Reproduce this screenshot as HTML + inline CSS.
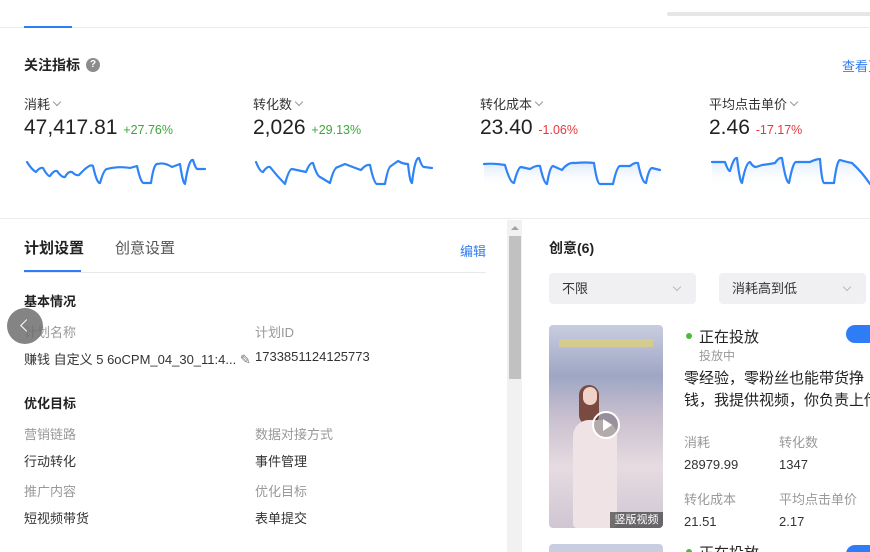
<!DOCTYPE html>
<html><head><meta charset="utf-8"><style>
*{margin:0;padding:0;box-sizing:border-box}
html,body{width:870px;height:552px;overflow:hidden}
body{background:#fff;font-family:"Liberation Sans","Noto Sans CJK SC",sans-serif;color:#333;position:relative}
.a{position:absolute;white-space:nowrap}
.lab{font-size:13px;color:#333}
.num{font-size:21px;color:#222}
.up{font-size:12.5px;color:#3da53d}
.dn{font-size:12.5px;color:#e8383d}
.g{font-size:13px;color:#999}
.v{font-size:13px;color:#333}
.b{font-size:13px;font-weight:bold;color:#222}
.sel{position:absolute;background:#f0f0f2;border-radius:4px;height:31px;top:273px;font-size:13px;color:#333;padding:0 13px;line-height:31px}
.chev{display:inline-block;width:6px;height:6px;border-right:1px solid #999;border-bottom:1px solid #999;transform:rotate(45deg);margin-left:4px;position:relative;top:-4px}
.sel .chev{position:absolute;right:16px;top:11px;border-color:#bbb}
</style></head><body>
<div class="a" style="left:0;top:27px;width:870px;height:1px;background:#ececec"></div>
<div class="a" style="left:24px;top:26px;width:48px;height:2px;background:#2f7df6"></div>
<div class="a" style="left:667px;top:12px;width:210px;height:4px;background:#e6e6e6;border-radius:3px"></div>

<div class="a" style="left:24px;top:55px;font-size:14px;font-weight:bold;color:#222">关注指标</div>
<div class="a" style="left:86px;top:58px;width:14px;height:14px;border-radius:50%;background:#8c8c8c;color:#fff;font-size:10px;text-align:center;line-height:14px;font-weight:bold">?</div>
<div class="a" style="left:842px;top:56px;font-size:13px;color:#2f7df6">查看更多</div>

<div class="a lab" style="left:24px;top:94px">消耗<span class="chev"></span></div>
<div class="a num" style="left:24px;top:116px">47,417.81 <span class="up">+27.76%</span></div>
<div class="a lab" style="left:253px;top:94px">转化数<span class="chev"></span></div>
<div class="a num" style="left:253px;top:116px">2,026 <span class="up">+29.13%</span></div>
<div class="a lab" style="left:480px;top:94px">转化成本<span class="chev"></span></div>
<div class="a num" style="left:480px;top:116px">23.40 <span class="dn">-1.06%</span></div>
<div class="a lab" style="left:709px;top:94px">平均点击单价<span class="chev"></span></div>
<div class="a num" style="left:709px;top:116px">2.46 <span class="dn">-17.17%</span></div>

<svg class="a" style="left:0;top:150px" width="870" height="40">
<defs><linearGradient id="f" x1="0" y1="0" x2="0" y2="1"><stop offset="0" stop-color="#dce9fb"/><stop offset="1" stop-color="#fff" stop-opacity="0"/></linearGradient></defs>
<g fill="url(#f)" stroke="none">
<path d="M484 14 L505 15 L514 33 L521 17 L530 19 L540 16 L547 34 L553 16 L562 20 L575 13 L594 13 L600 34 L613 34 L620 16 L630 16 L638 13 L646 33 L652 18 L660 20 L660 38 L484 38Z"/>
<path d="M712 12 L725 12 L730 21 L737 8 L742 33 L750 12 L756 17 L762 15 L775 13 L782 8 L789 33 L796 12 L810 12 L820 9 L824 33 L834 33 L840 10 L852 13 L870 34 L870 38 L712 38Z"/>
</g>
<g fill="none" stroke="#2f84f5" stroke-width="2.2" stroke-linejoin="round" stroke-linecap="round">
<path d="M27 12 Q32 20 36 22 Q40 17 43 18 Q48 27 50 26 Q54 20 57 21 Q62 28 65 27 Q68 21 72 22 Q76 26 79 25 Q90 13 93 16 Q97 34 100 33 Q104 19 107 19 Q118 16 130 18 L137 16 Q141 34 144 33 L151 33 Q154 12 158 14 Q164 12 172 17 L180 14 Q183 34 185 34 Q189 8 193 10 Q196 20 198 19 L205 19"/>
<path d="M256 12 Q260 22 263 22 Q267 16 270 17 Q277 26 285 34 Q289 19 292 19 L306 22 Q310 12 313 13 Q317 26 320 27 L330 33 Q334 17 338 17 L345 14 Q355 18 361 20 Q366 14 370 15 Q374 34 377 34 L385 34 Q388 17 391 16 L398 11 Q403 14 408 14 Q410 33 412 33 Q415 7 419 8 Q422 17 424 17 L432 18"/>
<path d="M484 14 Q495 13 505 15 Q510 33 514 33 Q518 17 521 17 L530 19 Q536 15 540 16 Q544 34 547 34 Q550 16 553 16 L562 20 Q568 12 575 13 Q586 12 594 13 Q597 34 600 34 L613 34 Q617 16 620 16 L630 16 Q635 12 638 13 Q642 33 646 33 Q649 18 652 18 L660 20"/>
<path d="M712 12 L725 12 Q728 21 730 21 Q734 7 737 8 Q740 33 742 33 Q746 12 750 12 Q753 17 756 17 L762 15 Q770 14 775 13 Q779 7 782 8 Q786 33 789 33 Q793 12 796 12 L810 12 Q816 9 820 9 Q822 33 824 33 L834 33 Q837 10 840 10 Q847 12 852 13 Q862 22 870 34"/>
</g></svg>

<div class="a" style="left:0;top:218px;width:870px;height:1px;background:#ececec"></div>

<div class="a" style="left:24px;top:237px;font-size:15px;font-weight:bold;color:#222">计划设置</div>
<div class="a" style="left:115px;top:237px;font-size:15px;color:#555">创意设置</div>
<div class="a" style="left:460px;top:241px;font-size:13px;color:#2f7df6">编辑</div>
<div class="a" style="left:24px;top:272px;width:462px;height:1px;background:#e8e8e8"></div>
<div class="a" style="left:24px;top:270px;width:57px;height:2px;background:#2f7df6"></div>
<div class="a b" style="left:24px;top:291px">基本情况</div>
<div class="a g" style="left:24px;top:322px">计划名称</div>
<div class="a g" style="left:255px;top:322px">计划ID</div>
<div class="a v" style="left:24px;top:349px">赚钱 自定义 5 6oCPM_04_30_11:4... <span style="color:#777">✎</span></div>
<div class="a v" style="left:255px;top:349px">1733851124125773</div>
<div class="a b" style="left:24px;top:393px">优化目标</div>
<div class="a g" style="left:24px;top:424px">营销链路</div>
<div class="a g" style="left:255px;top:424px">数据对接方式</div>
<div class="a v" style="left:24px;top:451px">行动转化</div>
<div class="a v" style="left:255px;top:451px">事件管理</div>
<div class="a g" style="left:24px;top:481px">推广内容</div>
<div class="a g" style="left:255px;top:481px">优化目标</div>
<div class="a v" style="left:24px;top:508px">短视频带货</div>
<div class="a v" style="left:255px;top:508px">表单提交</div>
<div class="a" style="left:7px;top:308px;width:36px;height:36px;border-radius:50%;background:rgba(110,110,110,.85)"><div style="position:absolute;left:15px;top:13px;width:9px;height:9px;border-left:1.5px solid #fff;border-bottom:1.5px solid #fff;transform:rotate(45deg)"></div></div>

<div class="a" style="left:507px;top:220px;width:15px;height:332px;background:#f1f1f1"></div>
<div class="a" style="left:509px;top:236px;width:12px;height:143px;background:#c1c1c1"></div>
<div class="a" style="left:511px;top:226px;width:0;height:0;border-left:4px solid transparent;border-right:4px solid transparent;border-bottom:4px solid #a3a3a3"></div>

<div class="a" style="left:549px;top:238px;font-size:14px;font-weight:bold;color:#222">创意(6)</div>
<div class="sel" style="left:549px;width:147px">不限<span class="chev"></span></div>
<div class="sel" style="left:719px;width:147px">消耗高到低<span class="chev"></span></div>

<div class="a" style="left:549px;top:325px;width:114px;height:203px;border-radius:4px;background:linear-gradient(180deg,#c9cde0 0%,#9ea6c4 25%,#c8bfcf 45%,#e6dbe0 70%,#cfc6d4 100%);overflow:hidden">
<div class="a" style="left:10px;top:14px;width:94px;height:8px;background:#e0d270;opacity:.7"></div>
<div class="a" style="left:30px;top:60px;width:20px;height:40px;border-radius:10px;background:#7a4a40"></div>
<div class="a" style="left:34px;top:62px;width:14px;height:18px;border-radius:7px;background:#f0d2c8"></div>
<div class="a" style="left:24px;top:95px;width:44px;height:108px;border-radius:16px 16px 4px 4px;background:#efe3e6"></div>
<div class="a" style="left:43px;top:86px;width:28px;height:28px;border-radius:50%;border:2px solid #fff;background:rgba(0,0,0,.25)"></div>
<div class="a" style="left:54px;top:94px;width:0;height:0;border-top:6px solid transparent;border-bottom:6px solid transparent;border-left:9px solid #fff"></div>
<div class="a" style="left:61px;top:187px;width:53px;height:16px;background:rgba(60,60,60,.7);color:#fff;font-size:11px;text-align:center;line-height:16px">竖版视频</div>
</div>
<div class="a" style="left:549px;top:544px;width:114px;height:20px;border-radius:4px;background:#c9cde0"></div>

<div class="a" style="left:686px;top:333px;width:6px;height:6px;border-radius:50%;background:#4cbb3c"></div>
<div class="a" style="left:699px;top:326px;font-size:15px;color:#222">正在投放</div>
<div class="a" style="left:699px;top:347px;font-size:12px;color:#999">投放中</div>
<div class="a" style="left:846px;top:325px;width:40px;height:18px;border-radius:9px;background:#2f7df6"></div>
<div class="a" style="left:684px;top:368px;font-size:15px;color:#222;line-height:22px">零经验，零粉丝也能带货挣<br>钱，我提供视频，你负责上传</div>
<div class="a g" style="left:684px;top:432px">消耗</div>
<div class="a g" style="left:779px;top:432px">转化数</div>
<div class="a v" style="left:684px;top:457px">28979.99</div>
<div class="a v" style="left:779px;top:457px">1347</div>
<div class="a g" style="left:684px;top:489px">转化成本</div>
<div class="a g" style="left:779px;top:489px">平均点击单价</div>
<div class="a v" style="left:684px;top:514px">21.51</div>
<div class="a v" style="left:779px;top:514px">2.17</div>
<div class="a" style="left:686px;top:549px;width:6px;height:6px;border-radius:50%;background:#4cbb3c"></div>
<div class="a" style="left:699px;top:542px;font-size:15px;color:#222">正在投放</div>
<div class="a" style="left:846px;top:545px;width:40px;height:18px;border-radius:9px;background:#2f7df6"></div>
</body></html>
